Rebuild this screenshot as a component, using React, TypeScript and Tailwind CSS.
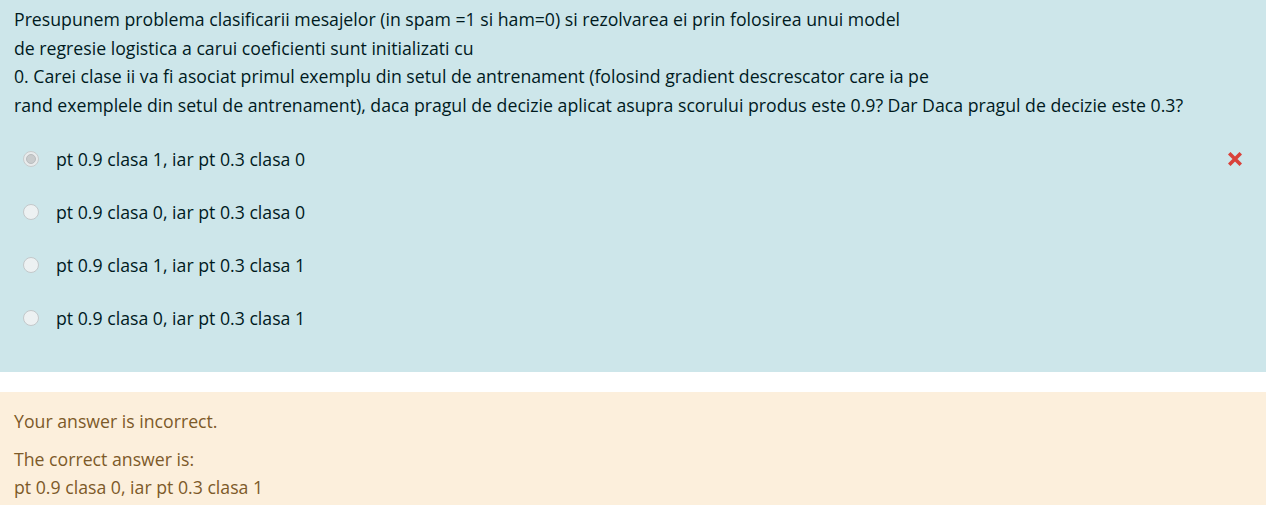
import React from "react";

const options = [
  "pt 0.9 clasa 1, iar pt 0.3 clasa 0",
  "pt 0.9 clasa 0, iar pt 0.3 clasa 0",
  "pt 0.9 clasa 1, iar pt 0.3 clasa 1",
  "pt 0.9 clasa 0, iar pt 0.3 clasa 1",
];

export default function App() {
  return (
    <div
      className="w-[1266px] h-[505px] bg-white overflow-hidden"
      style={{ fontFamily: '"Open Sans", "Noto Sans", sans-serif' }}
    >
      <div className="bg-[#cde6ea] text-[#001a1e] h-[372px] px-[14px] pt-[5px] relative">
        <div className="text-[17.7px] leading-[28.5px]">
          Presupunem problema clasificarii mesajelor (in spam =1 si ham=0) si rezolvarea ei prin folosirea unui model
          <br />
          de regresie logistica a carui coeficienti sunt initializati cu
          <br />
          0. Carei clase ii va fi asociat primul exemplu din setul de antrenament (folosind gradient descrescator care ia pe
          <br />
          rand exemplele din setul de antrenament), daca pragul de decizie aplicat asupra scorului produs este 0.9? Dar Daca pragul de decizie este 0.3?
        </div>
        <div className="mt-[26px] flex flex-col gap-[25px]">
          {options.map((o, i) => (
            <div key={i} className="flex items-center h-[28px] text-[17.7px]">
              <span
                className={
                  "ml-[9px] w-[16px] h-[16px] rounded-full border flex items-center justify-center " +
                  (i === 0 ? "border-[#c8cccd] bg-[#e8ebec]" : "border-[#c3c8ca] bg-[#edf1f2]")
                }
              >
                {i === 0 && (
                  <span className="w-[10px] h-[10px] rounded-full bg-[#c9cccd] border border-[#b9bdbf]" />
                )}
              </span>
              <span className="ml-[17px]">{o}</span>
              {i === 0 && (
                <svg className="ml-auto mr-[10px]" width="14" height="14" viewBox="0 0 14 14">
                  <path d="M2.5 2.5 L11.5 11.5 M11.5 2.5 L2.5 11.5" stroke="#d9413a" strokeWidth="3.6" strokeLinecap="square" />
                </svg>
              )}
            </div>
          ))}
        </div>
      </div>
      <div className="h-[20px] bg-white" />
      <div className="bg-[#fcefdc] text-[#7d5a29] h-[113px] px-[14px] pt-[15px] text-[17.7px] leading-[28px]">
        <div>Your answer is incorrect.</div>
        <div className="mt-[10px]">The correct answer is:</div>
        <div>pt 0.9 clasa 0, iar pt 0.3 clasa 1</div>
      </div>
    </div>
  );
}
